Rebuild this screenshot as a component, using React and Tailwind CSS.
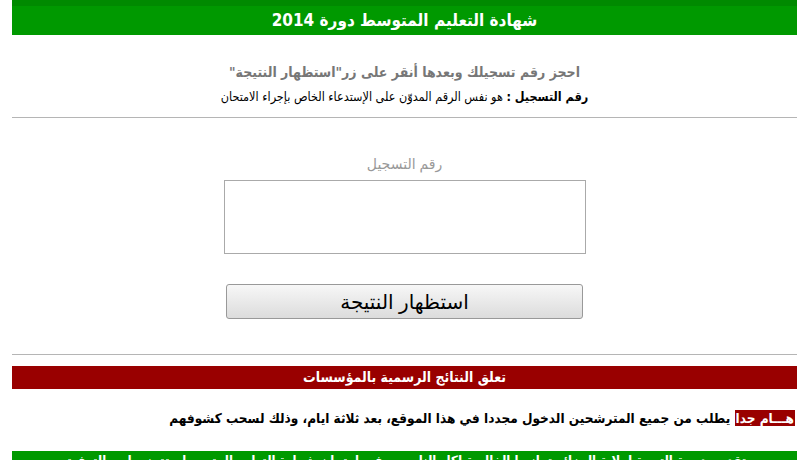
export default function App() {
  return (
    <div
      dir="rtl"
      className="min-h-screen bg-white pl-[12px] pr-[3px] text-black"
      style={{ fontFamily: '"Liberation Sans", "DejaVu Sans", sans-serif' }}
    >
      {/* Header */}
      <div className="border-t-[6px] border-[#008a00] bg-[#009900] h-[35px] flex items-center justify-center">
        <h1 className="text-white font-bold text-[17px] leading-none font-['DejaVu_Sans_Condensed',sans-serif]">شهادة التعليم المتوسط دورة 2014</h1>
      </div>

      <div className="pt-[24px] text-center font-['DejaVu_Sans_Condensed',sans-serif]">
        <p className="text-[#777] font-bold text-[14px] leading-[26px]">احجز رقم تسجيلك وبعدها أنقر على زر"استظهار النتيجة"</p>
        <p className="text-[12.5px] leading-[24px]">
          <span className="font-bold">رقم التسجيل :</span> هو نفس الرقم المدوّن على الإستدعاء الخاص بإجراء الامتحان
        </p>
      </div>

      <hr className="mt-[8px] border-t border-[#b5b5b5]" />

      {/* Form */}
      <div className="flex flex-col items-center pt-[36px]">
        <label className="text-[#999] text-[14px] leading-[20px] mb-[6px]">رقم التسجيل</label>
        <textarea className="w-[362px] h-[74px] border border-[#aaa] resize-none outline-none" />
        <button className="mt-[30px] w-[357px] h-[35px] border border-[#999] rounded-[3px] bg-gradient-to-b from-[#f7f7f7] to-[#dcdcdc] text-[20px] text-black">
          استظهار النتيجة
        </button>
      </div>

      <hr className="mt-[35px] border-t border-[#b5b5b5]" />

      {/* Results notice */}
      <div className="mt-[11px] bg-[#990000] h-[23px] flex items-center justify-center font-['DejaVu_Sans_Condensed',sans-serif]">
        <p className="text-white font-bold text-[14px]">تعلق النتائج الرسمية بالمؤسسات</p>
      </div>

      <p className="mt-[18px] pr-[2px] font-bold text-[13.5px] leading-[22px] font-['DejaVu_Sans_Condensed',sans-serif]">
        <span className="bg-[#990000] text-white px-[1px]">هـــام جدا</span> يطلب من جميع المترشحين الدخول مجددا في هذا الموقع، بعد ثلاثة ايام، وذلك لسحب كشوفهم
      </p>

      <div className="mt-[22px] bg-[#009900] h-[30px] flex items-start justify-center pt-[3px] font-['DejaVu_Sans_Condensed',sans-serif]">
        <p className="text-white font-bold text-[13px] leading-none">تقدم مديرية التربية لولاية الجزائر تهانيها الخالصة لكل الناجحين في امتحان شهادة التعليم المتوسط وتتمنى لهم التوفيق</p>
      </div>
    </div>
  )
}
